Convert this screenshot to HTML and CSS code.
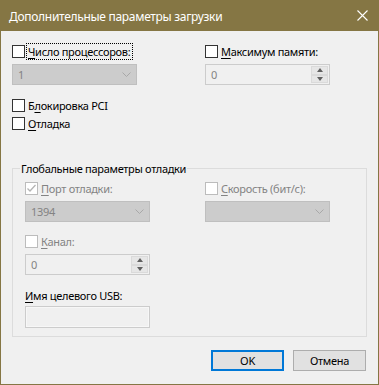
FILE: index.html
```html
<!DOCTYPE html>
<html lang="ru">
<head>
  <meta charset="UTF-8" />
  <title>Дополнительные параметры загрузки</title>
  <link rel="stylesheet" href="styles.css">
</head>
<body>
<div class="window">
  <div class="titlebar">
    <span class="title">Дополнительные параметры загрузки</span>
    <svg class="close" width="11" height="11" viewBox="0 0 11 11">
      <path d="M0.5 0.5 L10.5 10.5 M10.5 0.5 L0.5 10.5" stroke="#fff" stroke-width="1.1" fill="none"/>
    </svg>
  </div>

  <div class="dialog">
    <div class="top">
      <div class="col">
        <label class="check"><span class="box"></span><span class="text focused"><u>Ч</u>исло процессоров:</span></label>
        <div class="combo off">
          <span>1</span>
          <svg class="chev" width="9" height="5" viewBox="0 0 9 5"><path d="M0.5 0.5 L4.5 4.5 L8.5 0.5" stroke="#a8a8a8" fill="none"/></svg>
        </div>
      </div>
      <div class="col">
        <label class="check"><span class="box"></span><span class="text"><u>М</u>аксимум памяти:</span></label>
        <div class="spin off">
          <span class="val">0</span>
          <span class="spin-btns">
            <span class="sbtn"><i class="tri up"></i></span>
            <span class="sbtn"><i class="tri down"></i></span>
          </span>
        </div>
      </div>
    </div>

    <label class="check row-pci"><span class="box"></span><span class="text">Б<u>л</u>окировка PCI</span></label>
    <label class="check row-debug"><span class="box"></span><span class="text"><u>О</u>тладка</span></label>

    <fieldset class="group">
      <legend>Глобальные параметры отладки</legend>
      <div class="group-grid">
        <div class="col">
          <label class="check off"><span class="box checked">
            <svg width="11" height="11" viewBox="0 0 11 11"><path d="M1.5 5.5 L4 8 L9.5 2" stroke="#b4b4b4" stroke-width="1.3" fill="none"/></svg>
          </span><span class="text"><u>П</u>орт отладки:</span></label>
          <div class="combo off">
            <span>1394</span>
            <svg class="chev" width="9" height="5" viewBox="0 0 9 5"><path d="M0.5 0.5 L4.5 4.5 L8.5 0.5" stroke="#a8a8a8" fill="none"/></svg>
          </div>

          <label class="check off row-channel"><span class="box"></span><span class="text"><u>К</u>анал:</span></label>
          <div class="spin off">
            <span class="val">0</span>
            <span class="spin-btns">
              <span class="sbtn"><i class="tri up"></i></span>
              <span class="sbtn"><i class="tri down"></i></span>
            </span>
          </div>

          <div class="field-label"><u>И</u>мя целевого USB:</div>
          <div class="textbox off"></div>
        </div>
        <div class="col">
          <label class="check off"><span class="box"></span><span class="text"><u>С</u>корость (бит/с):</span></label>
          <div class="combo off">
            <span></span>
            <svg class="chev" width="9" height="5" viewBox="0 0 9 5"><path d="M0.5 0.5 L4.5 4.5 L8.5 0.5" stroke="#a8a8a8" fill="none"/></svg>
          </div>
        </div>
      </div>
    </fieldset>

    <div class="buttons">
      <button class="btn default">OK</button>
      <button class="btn">Отмена</button>
    </div>
  </div>
</div>
</body>
</html>
```

FILE: styles.css
```css
body {
  margin: 0;
  font-family: 'Noto Sans', 'Liberation Sans', sans-serif;
  font-size: 11px;
  letter-spacing: -0.3px;
  color: #000;
  background: #f0f0f0;
  overflow: hidden;
}
.window {
  width: 379px;
  height: 385px;
  display: flex;
  flex-direction: column;
}
.titlebar {
  height: 31px;
  flex: none;
  background: #857644;
  display: flex;
  align-items: center;
  justify-content: space-between;
  padding: 0 11px 0 9px;
  box-sizing: border-box;
}
.title {
  color: #fff;
  font-size: 12px;
  letter-spacing: -0.3px;
  margin-top: 1px;
}
.dialog {
  flex: 1;
  background: #f0f0f0;
  border: 1px solid #857644;
  border-top: none;
  padding: 13px 11px 0 11px;
}
.top {
  display: grid;
  grid-template-columns: 193px 1fr;
}
.check {
  display: flex;
  align-items: center;
  height: 15px;
  line-height: 15px;
}
.box {
  width: 13px;
  height: 13px;
  box-sizing: border-box;
  border: 1px solid #333;
  background: #fff;
  flex: none;
  display: flex;
  align-items: center;
  justify-content: center;
}
.text {
  margin-left: 2px;
  padding: 0 1px;
  white-space: nowrap;
}
.focused {
  padding-right: 2px;
  outline: 1px dotted #000;
  outline-offset: 0;
}
u { text-decoration-thickness: 1px; text-underline-offset: 2px; }
.off .box { border-color: #bcbcbc; }
.off .text { color: #838383; }
.combo {
  margin-top: 5px;
  width: 125px;
  height: 21px;
  box-sizing: border-box;
  display: flex;
  align-items: center;
  justify-content: space-between;
  padding: 0 5px 0 5px;
}
.combo.off {
  background: #cccccc;
  border: 1px solid #bfbfbf;
  color: #838383;
}
.spin {
  margin-top: 5px;
  width: 125px;
  height: 21px;
  box-sizing: border-box;
  display: flex;
  align-items: stretch;
  justify-content: space-between;
  border: 1px solid #cccccc;
  background: #f0f0f0;
}
.spin .val {
  color: #838383;
  padding-left: 5px;
  line-height: 19px;
}
.spin-btns {
  width: 17px;
  display: flex;
  flex-direction: column;
  justify-content: space-between;
  padding: 1px 1px 1px 0;
}
.sbtn {
  height: 8px;
  background: #e6e6e6;
  border: 1px solid #dadada;
  display: flex;
  align-items: center;
  justify-content: center;
}
.tri {
  width: 0;
  height: 0;
  border-left: 3.5px solid transparent;
  border-right: 3.5px solid transparent;
}
.tri.up { border-bottom: 4px solid #606060; }
.tri.down { border-top: 4px solid #606060; }
.row-pci { margin-top: 13px; }
.row-debug { margin-top: 3px; }
.group {
  margin: 30px 0 0 0;
  border: 1px solid #dcdcdc;
  padding: 0 12px 8px 12px;
}
.group legend {
  margin-left: -5px;
  padding: 0 1px;
  line-height: 15px;
}
.group-grid {
  display: grid;
  grid-template-columns: 180px 1fr;
  padding-top: 5px;
}
.row-channel { margin-top: 12px; }
.field-label {
  margin-top: 13px;
  line-height: 15px;
}
.textbox {
  margin-top: 3px;
  width: 125px;
  height: 22px;
  box-sizing: border-box;
  border: 1px solid #cccccc;
  box-shadow: inset 0 0 0 1px #f7f7f7;
  background: #f0f0f0;
}
.buttons {
  display: flex;
  justify-content: flex-end;
  gap: 9px;
  margin-top: 13px;
  padding-right: 1px;
}
.btn {
  width: 73px;
  height: 21px;
  box-sizing: border-box;
  background: #e1e1e1;
  border: 1px solid #adadad;
  font-family: inherit;
  font-size: 11px;
  letter-spacing: -0.3px;
  color: #000;
  padding: 0;
}
.btn.default {
  border: 2px solid #0078d7;
}
```
